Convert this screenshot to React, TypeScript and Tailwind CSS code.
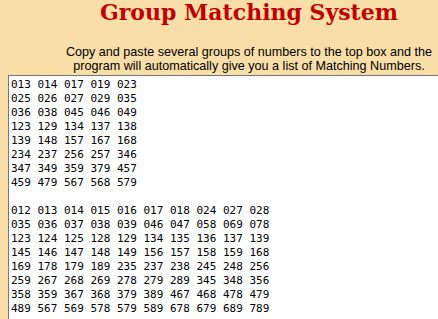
import React from "react";

const groupA = [
  "013 014 017 019 023",
  "025 026 027 029 035",
  "036 038 045 046 049",
  "123 129 134 137 138",
  "139 148 157 167 168",
  "234 237 256 257 346",
  "347 349 359 379 457",
  "459 479 567 568 579",
];

const groupB = [
  "012 013 014 015 016 017 018 024 027 028",
  "035 036 037 038 039 046 047 058 069 078",
  "123 124 125 128 129 134 135 136 137 139",
  "145 146 147 148 149 156 157 158 159 168",
  "169 178 179 189 235 237 238 245 248 256",
  "259 267 268 269 278 279 289 345 348 356",
  "358 359 367 368 379 389 467 468 478 479",
  "489 567 569 578 579 589 678 679 689 789",
];

export default function App() {
  const text = [...groupA, "", ...groupB].join("\n");
  return (
    <div className="w-full h-[319px] overflow-hidden bg-[#f9dea8]">
      <div className="w-[498px] flex flex-col items-center">
        <h1 className="text-[22px] leading-[24px] font-bold text-[#c00000] font-['DejaVu_Serif',serif]">
          Group Matching System
        </h1>
        <p className="mt-[21px] text-[12.6px] leading-[14px] text-black text-center font-['Liberation_Sans',Arial,sans-serif]">
          Copy and paste several groups of numbers to the top box and the
          <br />
          program will automatically give you a list of Matching Numbers.
        </p>
        <div className="self-stretch ml-[8px] mt-[2px] h-[300px] bg-white border border-[#767676] px-[2px] pt-[2px]">
          <pre className="m-0 text-[11px] leading-[14px] text-black font-['DejaVu_Sans_Mono',monospace]">
            {text}
          </pre>
        </div>
      </div>
    </div>
  );
}
